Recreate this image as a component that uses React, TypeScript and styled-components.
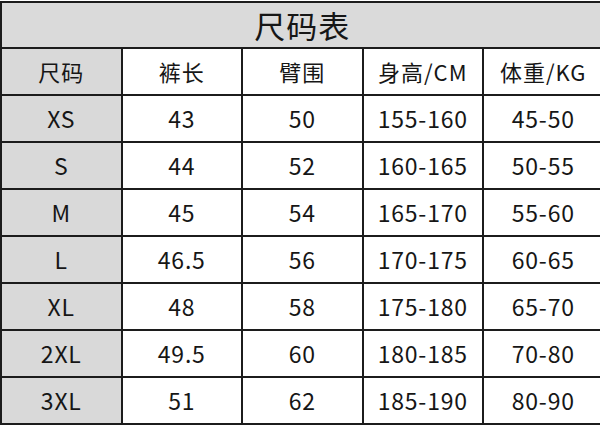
import { createGlobalStyle } from 'styled-components';
import styled from 'styled-components';

const GlobalStyle = createGlobalStyle`
  html, body {
    margin: 0;
    padding: 0;
    background: #ffffff;
    overflow: hidden;
  }
  body {
    font-family: "Noto Sans CJK SC", "Noto Sans", sans-serif;
    font-weight: 400;
    color: #161616;
  }
`;

const Table = styled.div`
  margin-top: 1px;
  width: 604.5px;
  border-top: 2px solid #1c1c1c;
  border-left: 2px solid #1c1c1c;
  box-sizing: border-box;
`;

const TitleRow = styled.div`
  height: 46px;
  display: flex;
  align-items: center;
  justify-content: center;
  background: #dadada;
  border-bottom: 2px solid #1c1c1c;
  border-right: 2px solid #1c1c1c;
  box-sizing: border-box;
  font-size: 31px;
  letter-spacing: 1px;
  padding-bottom: 2px;
`;

const Row = styled.div`
  display: grid;
  grid-template-columns: repeat(5, 120.5px);
  height: 47px;
`;

const Cell = styled.div<{ $shaded?: boolean; $cjk?: boolean }>`
  display: flex;
  align-items: center;
  justify-content: center;
  box-sizing: border-box;
  border-right: 2px solid #1c1c1c;
  border-bottom: 2px solid #1c1c1c;
  background: ${({ $shaded }) => ($shaded ? '#d9d9d9' : '#ffffff')};
  font-size: ${({ $cjk }) => ($cjk ? '22px' : '23px')};
  letter-spacing: ${({ $cjk }) => ($cjk ? '1px' : '0.8px')};
  padding-bottom: 1px;
`;

const headers = ['尺码', '裤长', '臂围', '身高/CM', '体重/KG'];

const rows = [
  ['XS', '43', '50', '155-160', '45-50'],
  ['S', '44', '52', '160-165', '50-55'],
  ['M', '45', '54', '165-170', '55-60'],
  ['L', '46.5', '56', '170-175', '60-65'],
  ['XL', '48', '58', '175-180', '65-70'],
  ['2XL', '49.5', '60', '180-185', '70-80'],
  ['3XL', '51', '62', '185-190', '80-90'],
];

export default function App() {
  return (
    <>
      <GlobalStyle />
      <Table>
        <TitleRow>尺码表</TitleRow>
        <Row>
          {headers.map((h, i) => (
            <Cell key={h} $shaded={i === 0} $cjk>
              {h}
            </Cell>
          ))}
        </Row>
        {rows.map((row) => (
          <Row key={row[0]}>
            {row.map((value, i) => (
              <Cell key={`${row[0]}-${i}`} $shaded={i === 0}>
                {value}
              </Cell>
            ))}
          </Row>
        ))}
      </Table>
    </>
  );
}
